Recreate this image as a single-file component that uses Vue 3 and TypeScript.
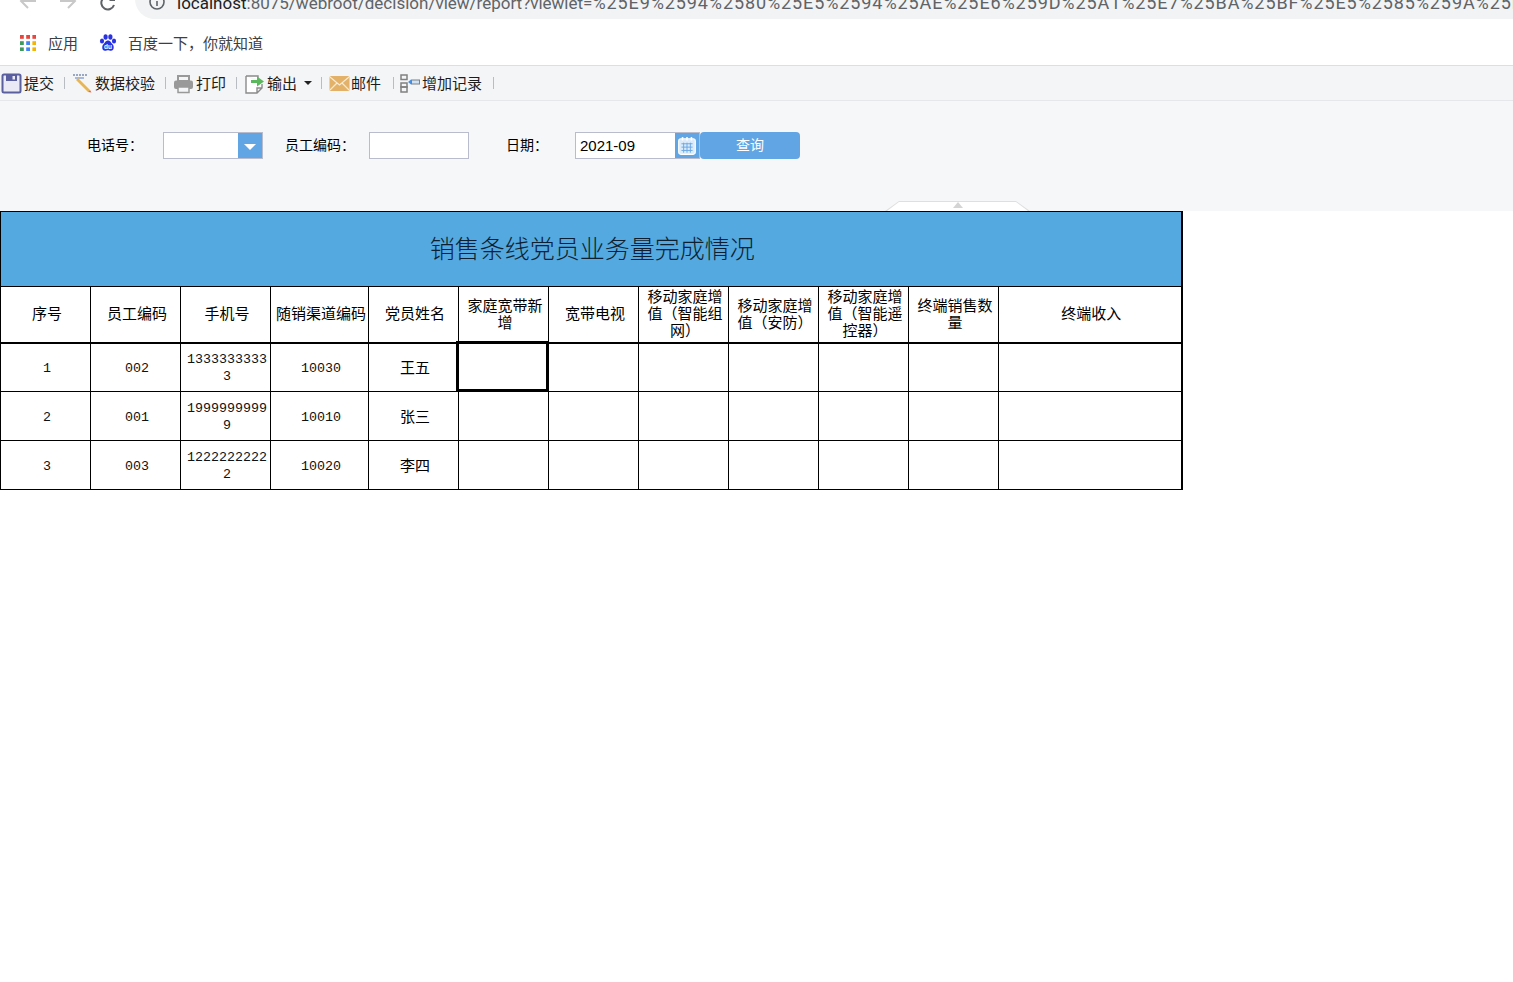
<script setup lang="ts">
interface Row {
  no: number
  code: string
  phone: string
  channel: string
  name: string
}

const urlHost = 'localhost'
const urlPath = ':8075/webroot/decision/view/report?viewlet='
const urlEncoded =
  '%25E9%2594%2580%25E5%2594%25AE%25E6%259D%25A1%25E7%25BA%25BF%25E5%2585%259A%25E5%2591%2598'

const colWidths = [90, 90, 90, 98, 90, 90, 90, 90, 90, 90, 90, 183]

const headers = [
  '序号',
  '员工编码',
  '手机号',
  '随销渠道编码',
  '党员姓名',
  '家庭宽带新增',
  '宽带电视',
  '移动家庭增值（智能组网）',
  '移动家庭增值（安防）',
  '移动家庭增值（智能遥控器）',
  '终端销售数量',
  '终端收入',
]

const rows: Row[] = [
  { no: 1, code: '002', phone: '13333333333', channel: '10030', name: '王五' },
  { no: 2, code: '001', phone: '19999999999', channel: '10010', name: '张三' },
  { no: 3, code: '003', phone: '12222222222', channel: '10020', name: '李四' },
]

const emptyCols = [0, 1, 2, 3, 4, 5, 6]
const appColors = ['#e8453c', '#e8453c', '#e8453c', '#3d9a5b', '#4285f4', '#f4b400', '#3d9a5b', '#4285f4', '#f4b400']
</script>

<template>
  <div class="page">
    <!-- browser chrome, cut off at the top of the shot -->
    <div class="nav-row">
      <svg class="nav-icon" width="18" height="18" viewBox="0 0 18 18">
        <path d="M17 9H3M9 2 2 9l7 7" fill="none" stroke="#c8c8c8" stroke-width="2" />
      </svg>
      <svg class="nav-icon" width="18" height="18" viewBox="0 0 18 18">
        <path d="M1 9h14M9 2l7 7-7 7" fill="none" stroke="#c8c8c8" stroke-width="2" />
      </svg>
      <svg class="nav-icon reload" width="18" height="18" viewBox="0 0 18 18">
        <path d="M15 11a6.500 6.500 0 1 1-1-6" fill="none" stroke="#5f6368" stroke-width="2" />
        <path d="M16 1v6h-6z" fill="#5f6368" />
      </svg>
      <div class="omnibox">
        <svg class="info" width="16" height="16" viewBox="0 0 16 16">
          <circle cx="8" cy="8" r="7" fill="none" stroke="#5f6368" stroke-width="1.600" />
          <path d="M8 7v5M8 4v1.600" stroke="#5f6368" stroke-width="1.600" />
        </svg>
        <span class="url"><span class="host">{{ urlHost }}</span>{{ urlPath }}<span class="enc">{{ urlEncoded }}</span></span>
      </div>
    </div>

    <div class="bookmarks">
      <svg class="apps" width="16" height="16" viewBox="0 0 16 16">
        <rect
          v-for="(c, i) in appColors" :key="i"
          :x="(i % 3) * 6.200" :y="Math.floor(i / 3) * 6.200"
          width="3.800" height="3.800" :fill="c"
        />
      </svg>
      <span class="bm-text">应用</span>
      <svg class="paw" width="18" height="18" viewBox="0 0 18 18">
        <ellipse cx="3" cy="7" rx="2.100" ry="2.600" fill="#2932e1" />
        <ellipse cx="6.600" cy="3" rx="2.100" ry="2.800" fill="#2932e1" />
        <ellipse cx="11.400" cy="3" rx="2.100" ry="2.800" fill="#2932e1" />
        <ellipse cx="15" cy="7" rx="2.100" ry="2.600" fill="#2932e1" />
        <path d="M9 6.500c-2.500 0-3 2.400-4.600 3.800C2.600 12 2.800 16.800 6 16.800c1.200 0 2-.5 3-.5s1.800.5 3 .5c3.200 0 3.400-4.800 1.600-6.500C12 8.900 11.500 6.500 9 6.500z" fill="#2932e1" />
        <text x="9" y="15.200" text-anchor="middle" class="du">du</text>
      </svg>
      <span class="bm-text baidu">百度一下，你就知道</span>
    </div>

    <!-- report toolbar -->
    <div class="toolbar">
      <div class="tool first">
        <svg width="21" height="21" viewBox="0 0 21 21">
          <rect x="1.500" y="1.500" width="18" height="18" rx="1.500" fill="#e9eaf5" stroke="#5a5f9f" stroke-width="2" />
          <rect x="5" y="2" width="11" height="6" fill="#5a5f9f" />
          <rect x="11.500" y="3" width="2.500" height="3.500" fill="#e9eaf5" />
        </svg>
        <span>提交</span>
      </div>
      <i class="sep"></i>
      <div class="tool">
        <svg width="21" height="21" viewBox="0 0 21 21">
          <path d="M1 2h15" stroke="#9aa7c4" stroke-width="2" stroke-dasharray="2 1" />
          <path d="M3 5h9" stroke="#8aa5dd" stroke-width="1.500" />
          <path d="M4 7l2-2 12 12-2 2z" fill="#e7b551" />
          <path d="M16 19l2-2 1.500 2.500z" fill="#e8674a" />
        </svg>
        <span>数据校验</span>
      </div>
      <i class="sep"></i>
      <div class="tool">
        <svg width="21" height="21" viewBox="0 0 21 21">
          <path d="M5 3h11v5H5z" fill="none" stroke="#999" stroke-width="2" />
          <rect x="1" y="7.500" width="19" height="8.500" rx="2" fill="#999" />
          <rect x="5" y="14" width="11" height="5.500" fill="#f4f5f7" stroke="#999" stroke-width="1.500" />
        </svg>
        <span>打印</span>
      </div>
      <i class="sep"></i>
      <div class="tool export">
        <svg width="21" height="21" viewBox="0 0 21 21">
          <path d="M2 3h12v3M2 3v17h11l5-5v-4M13 20v-5h5" fill="#fff" stroke="#8b8b8b" stroke-width="1.400" />
          <path d="M7 7h6V3.500L20 8.500l-7 5V10H7z" fill="#5cb85c" />
        </svg>
        <span>输出</span>
        <i class="caret"></i>
      </div>
      <i class="sep"></i>
      <div class="tool mail">
        <svg width="21" height="21" viewBox="0 0 21 21">
          <rect x="0.500" y="3" width="20" height="15" rx="1.500" fill="#e3b268" />
          <path d="M1 4l9.500 8L20 4M1 17l7-7M20 17l-7-7" fill="none" stroke="#f7ebd4" stroke-width="1.200" />
        </svg>
        <span>邮件</span>
      </div>
      <i class="sep"></i>
      <div class="tool add">
        <svg width="21" height="21" viewBox="0 0 21 21">
          <rect x="1" y="2" width="6" height="4.500" fill="none" stroke="#808080" stroke-width="1.500" />
          <rect x="1" y="10" width="6" height="4" fill="none" stroke="#808080" stroke-width="1.500" />
          <rect x="1" y="14" width="6" height="5" fill="none" stroke="#808080" stroke-width="1.500" />
          <path d="M8 9l3-2.500v5z" fill="#4a90e2" />
          <rect x="11.500" y="7" width="8" height="4" fill="#cfe2f7" stroke="#808080" />
        </svg>
        <span>增加记录</span>
      </div>
      <i class="sep"></i>
    </div>

    <!-- query form -->
    <div class="form">
      <label class="lbl">电话号：</label>
      <div class="field combo">
        <div class="combo-btn"><i class="combo-arrow"></i></div>
      </div>
      <label class="lbl lbl-code">员工编码：</label>
      <div class="field"></div>
      <label class="lbl lbl-date">日期：</label>
      <div class="field date">
        <span class="date-val">2021-09</span>
        <div class="date-btn">
          <svg width="20" height="20" viewBox="0 0 18 18">
            <rect x="1.500" y="2.500" width="15" height="14" rx="2" fill="#dcebfa" stroke="#fff" />
            <path d="M5 1v3M9 1v3M13 1v3" stroke="#fff" stroke-width="1.400" />
            <path d="M4 7h10M4 10h10M4 13h10M6 6v9M9 6v9M12 6v9" stroke="#6ea9e4" stroke-width="0.900" />
          </svg>
        </div>
      </div>
      <button class="query" type="button">查询</button>
      <div class="collapse-tab"><i class="collapse-arrow"></i></div>
    </div>

    <!-- report table -->
    <table class="report">
      <colgroup>
        <col v-for="(w, i) in colWidths" :key="i" :style="{ width: w + 'px' }" />
      </colgroup>
      <tbody>
        <tr class="title-row">
          <td colspan="12" class="title">销售条线党员业务量完成情况</td>
        </tr>
        <tr class="head-row">
          <td v-for="h in headers" :key="h">{{ h }}</td>
        </tr>
        <tr v-for="(r, ri) in rows" :key="r.no" class="data-row">
          <td class="num">{{ r.no }}</td>
          <td class="num">{{ r.code }}</td>
          <td class="num">{{ r.phone }}</td>
          <td class="num">{{ r.channel }}</td>
          <td class="name">{{ r.name }}</td>
          <td v-for="c in emptyCols" :key="c" :class="{ selected: ri === 0 && c === 0 }"></td>
        </tr>
      </tbody>
    </table>
  </div>
</template>

<style scoped>
.page {
  width: 1513px;
  height: 982px;
  overflow: hidden;
  background: #fff;
  font-family: "Noto Sans CJK SC", "Liberation Sans", sans-serif;
  color: #000;
}
.nav-row {
  height: 20px;
  display: flex;
  align-items: flex-end;
  overflow: hidden;
  padding-left: 19px;
}
.nav-icon {
  flex-shrink: 0;
  margin-right: 22px;
  margin-bottom: 10px;
}
.reload {
  margin-right: 18px;
  margin-bottom: 8px;
}
.omnibox {
  flex: 1;
  min-width: 0;
  height: 40px;
  margin-bottom: 1px;
  background: #f1f3f4;
  border-radius: 20px 0 0 20px;
  display: flex;
  align-items: flex-end;
  padding-left: 14px;
  white-space: nowrap;
  overflow: hidden;
}
.info {
  flex-shrink: 0;
  margin-right: 12px;
  margin-bottom: 9px;
}
.url {
  font-family: Roboto, "Liberation Sans", sans-serif;
  font-size: 17px;
  line-height: 20px;
  margin-bottom: 6px;
  color: #5f6368;
}
.host {
  color: #202124;
}
.enc {
  font-size: 18px;
  letter-spacing: 0.900px;
}
.bookmarks {
  height: 45px;
  display: flex;
  align-items: center;
  padding: 0 0 0 20px;
  box-sizing: border-box;
}
.apps {
  flex-shrink: 0;
}
.bm-text {
  font-size: 15px;
  color: #3c4043;
  margin-left: 12px;
}
.paw {
  margin-left: 21px;
}
.du {
  font-family: "Liberation Sans", sans-serif;
  font-size: 6.500px;
  font-weight: 700;
  fill: #fff;
}
.baidu {
  margin-left: 11px;
}
.toolbar {
  height: 36px;
  box-sizing: border-box;
  background: #f4f5f7;
  border-top: 1px solid #dcdee0;
  border-bottom: 1px solid #e6e7ea;
  display: flex;
  align-items: center;
  font-size: 15px;
  color: #1c1c1c;
}
.tool {
  display: flex;
  align-items: center;
  gap: 2px;
  padding: 0 10px 0 7px;
}
.tool span {
  margin-top: -2px;
}
.tool.first {
  padding-left: 1px;
}
.tool.export {
  padding-right: 9px;
}
.tool.mail {
  gap: 1px;
  padding-right: 12px;
}
.tool.add {
  gap: 1px;
  padding: 0 11px 0 6px;
}
.sep {
  width: 1px;
  height: 12px;
  background: #b9bcc2;
  flex-shrink: 0;
}
.caret {
  width: 0;
  height: 0;
  margin-left: 5px;
  border: 4px solid transparent;
  border-top: 4px solid #222;
  border-bottom: 0;
}
.form {
  position: relative;
  height: 110px;
  box-sizing: border-box;
  background: #f6f7f9;
  display: flex;
  align-items: flex-start;
  padding: 31px 0 0 87px;
  font-size: 14px;
}
.lbl {
  width: 76px;
  height: 27px;
  line-height: 25px;
  flex-shrink: 0;
}
.lbl-code {
  width: 84px;
  margin-left: 22px;
}
.lbl-date {
  width: 69px;
  margin-left: 37px;
}
.field {
  width: 100px;
  height: 27px;
  box-sizing: border-box;
  background: #fff;
  border: 1px solid #b8bccd;
  flex-shrink: 0;
}
.combo {
  display: flex;
  justify-content: flex-end;
}
.combo-btn {
  width: 24px;
  background: #62a5e5;
  display: flex;
  align-items: center;
  justify-content: center;
}
.combo-arrow {
  width: 0;
  height: 0;
  margin-top: 3px;
  border: 6px solid transparent;
  border-top: 6px solid #fff;
  border-bottom: 0;
}
.date {
  width: 125px;
  display: flex;
  justify-content: space-between;
}
.date-val {
  font-family: "Liberation Sans", sans-serif;
  font-size: 15px;
  line-height: 25px;
  padding-left: 4px;
}
.date-btn {
  width: 24px;
  background: #62a5e5;
  display: flex;
  align-items: center;
  justify-content: center;
}
.query {
  width: 100px;
  height: 27px;
  border: 0;
  padding: 0 0 3px;
  border-radius: 4px;
  background: #62a5e5;
  color: #fff;
  font-family: inherit;
  font-size: 14px;
  flex-shrink: 0;
}
.collapse-tab {
  position: absolute;
  left: 885px;
  bottom: 0;
  width: 145px;
  height: 10px;
  box-sizing: border-box;
  background: #dfdfdf;
  clip-path: polygon(14px 0, 131px 0, 100% 100%, 0 100%);
  display: flex;
  justify-content: center;
}
.collapse-tab::before {
  content: "";
  position: absolute;
  inset: 1px 0 0;
  background: #fff;
  clip-path: polygon(14px 0, 131px 0, 143px 100%, 2px 100%);
}
.collapse-arrow {
  position: relative;
  width: 0;
  height: 0;
  margin-top: 1px;
  border: 5px solid transparent;
  border-bottom: 6px solid #d4d4d4;
  border-top: 0;
}
.report {
  width: 1182px;
  table-layout: fixed;
  border-collapse: collapse;
  font-size: 15px;
  line-height: 17px;
}
.report td {
  border: 1px solid #000;
  padding: 0 0 3px 3px;
  text-align: center;
  vertical-align: middle;
  word-break: break-all;
}
.report td:last-child {
  border-right: 2px solid #000;
}
.title-row {
  height: 75px;
}
.report .title {
  background: #53a9e0;
  font-size: 25px;
  font-weight: 300;
  color: #0d1f30;
  padding: 0 0 4px 3px;
}
.head-row {
  height: 56px;
}
.report .head-row td {
  border-bottom: 2px solid #000;
}
.data-row {
  height: 49px;
}
.report .num {
  font-family: "Liberation Mono", monospace;
  font-size: 13.330px;
  padding: 2px 0 0 3px;
  color: #111;
}
.report .name {
  padding-bottom: 2px;
}
.report .selected {
  position: relative;
}
.report .selected::after {
  content: "";
  position: absolute;
  left: -3px;
  top: -3px;
  width: 93px;
  height: 51px;
  box-sizing: border-box;
  border: 3px solid #000;
}
</style>

<style>
html,
body {
  margin: 0;
  background: #fff;
}
</style>
